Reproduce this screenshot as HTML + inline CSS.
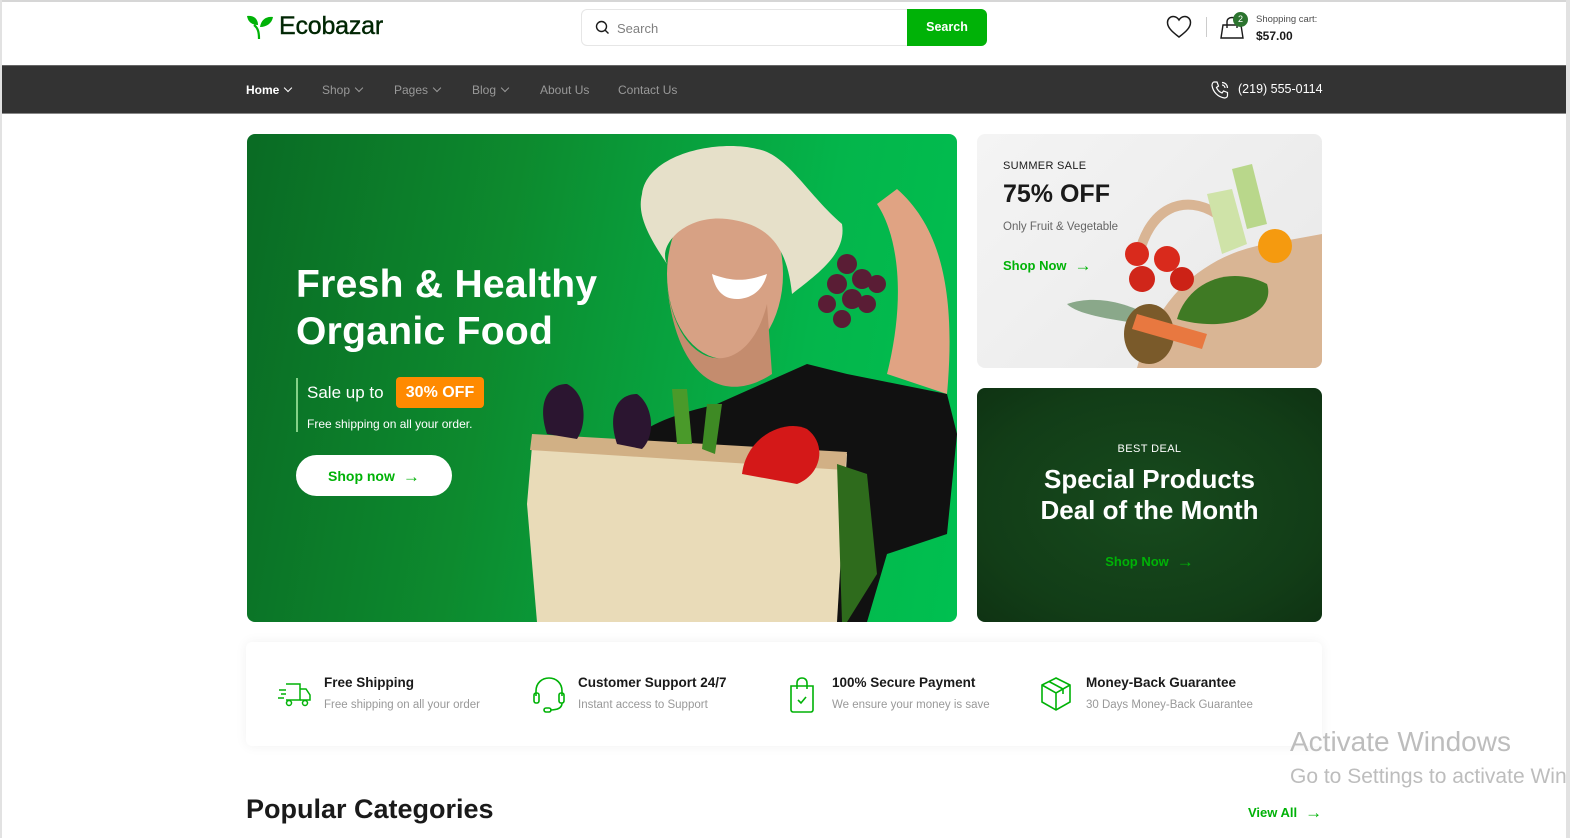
<!DOCTYPE html>
<html><head><meta charset="utf-8"><style>
*{margin:0;padding:0;box-sizing:border-box}
body{width:1570px;height:838px;overflow:hidden;background:#fff;font-family:"Liberation Sans",sans-serif;position:relative;color:#1a1a1a}
.a{position:absolute}
.bt{left:0;top:0;width:1570px;height:2px;background:#d6d6d6}
.bl{left:0;top:0;width:2px;height:838px;background:#e2e2e2}
.br{left:1566px;top:0;width:4px;height:838px;background:#e2e2e2}
.nav{left:2px;top:65px;width:1564px;height:49px;background:#333;border-top:1px solid #666;border-bottom:1px solid #888}
.nav span{position:absolute;top:17px;font-size:12px;color:#999}
.chev{display:inline-block;width:6px;height:6px;border-right:1.3px solid currentColor;border-bottom:1.3px solid currentColor;transform:rotate(45deg);margin-left:6px;position:relative;top:-3px}
.feat{left:246px;top:642px;width:1076px;height:104px;background:#fff;border-radius:6px;box-shadow:0 0 12px rgba(0,0,0,.06)}
.ft{position:absolute;font-size:13.5px;font-weight:bold;color:#1a1a1a;top:33px}
.fs{position:absolute;font-size:11.5px;color:#999;top:57px}
.arr{display:inline-block;font-size:17px;margin-left:8px;position:relative;top:1px;font-weight:normal}
</style></head><body>
<div class="a bt"></div><div class="a bl"></div><div class="a br"></div>
<svg class="a" style="left:246px;top:14px" width="28" height="26" viewBox="0 0 28 26"><path d="M13 25 C13 18 12 14 8 11" stroke="#00b207" stroke-width="2.2" fill="none"/><path d="M1 2 C8 1 12 5 12 11 C6 11 2 8 1 2Z" fill="#00b207"/><path d="M27 3 C20 2 15 6 14 13 C21 13 26 9 27 3Z" fill="#00b207"/></svg>
<div class="a" style="left:279px;top:12px;font-size:25px;color:#002603;letter-spacing:-0.2px;-webkit-text-stroke:0.4px #002603">Ecobazar</div>
<div class="a" style="left:581px;top:9px;width:406px;height:37px;border:1px solid #e6e6e6;border-radius:6px"></div>
<svg class="a" style="left:595px;top:20px" width="15" height="15" viewBox="0 0 15 15"><circle cx="6.5" cy="6.5" r="5" stroke="#1a1a1a" stroke-width="1.4" fill="none"/><path d="M10.2 10.2L13.5 13.5" stroke="#1a1a1a" stroke-width="1.4"/></svg>
<div class="a" style="left:617px;top:21px;font-size:13px;color:#808080">Search</div>
<div class="a" style="left:907px;top:9px;width:80px;height:37px;background:#00b207;border-radius:0 6px 6px 0;color:#fff;font-size:12.5px;font-weight:bold;text-align:center;line-height:37px">Search</div>
<svg class="a" style="left:1166px;top:15px" width="26" height="24" viewBox="0 0 26 24"><path d="M13 22 C5 16 1.5 12 1.5 7.5 C1.5 4 4 1.5 7.2 1.5 C9.8 1.5 11.7 3 13 5 C14.3 3 16.2 1.5 18.8 1.5 C22 1.5 24.5 4 24.5 7.5 C24.5 12 21 16 13 22Z" stroke="#1a1a1a" stroke-width="1.5" fill="none"/></svg>
<div class="a" style="left:1206px;top:17px;width:1px;height:20px;background:#ccc"></div>
<svg class="a" style="left:1219px;top:16px" width="26" height="24" viewBox="0 0 26 24"><path d="M2 22 L4 9 H22 L24 22Z" stroke="#1a1a1a" stroke-width="1.4" fill="none"/><path d="M8 12 V6 C8 3 10 1.5 13 1.5 C16 1.5 18 3 18 6 V12" stroke="#1a1a1a" stroke-width="1.4" fill="none"/></svg>
<div class="a" style="left:1233px;top:12px;width:15px;height:15px;border-radius:50%;background:#2c742f;color:#fff;font-size:9px;text-align:center;line-height:15px">2</div>
<div class="a" style="left:1256px;top:14px;font-size:9.5px;color:#4d4d4d">Shopping cart:</div>
<div class="a" style="left:1256px;top:29px;font-size:12px;font-weight:bold;color:#1a1a1a">$57.00</div>
<div class="a nav">
<span style="left:244px;color:#fff;font-weight:bold">Home<i class="chev"></i></span>
<span style="left:320px">Shop<i class="chev"></i></span>
<span style="left:392px">Pages<i class="chev"></i></span>
<span style="left:470px">Blog<i class="chev"></i></span>
<span style="left:538px">About Us</span>
<span style="left:616px">Contact Us</span>
<svg style="position:absolute;left:1208px;top:14px" width="20" height="20" viewBox="0 0 20 20"><path d="M4 2 L7 2 L8.5 6 L6.5 7.5 C7.5 10 9.5 12 12 13 L13.5 11 L17.5 12.5 V15.5 C17.5 17 16 18 14.5 18 C8 17 3 12 2 5.5 C2 3.5 3 2 4 2Z" stroke="#fff" stroke-width="1.2" fill="none"/><path d="M12 2.5 A5.5 5.5 0 0 1 17.5 8 M12 5 A3 3 0 0 1 15 8" stroke="#fff" stroke-width="1.2" fill="none"/></svg>
<span style="left:1236px;top:16px;color:#fff;font-size:12.5px">(219) 555-0114</span>
</div>
<div class="a" style="left:247px;top:134px;width:710px;height:488px;border-radius:8px;overflow:hidden;background:linear-gradient(100deg,#0a6b24 0%,#0d8a2e 35%,#04b54b 75%,#00c050 100%)">
<svg width="710" height="488" style="position:absolute;left:0;top:0">
<path d="M350 488 L360 330 C390 290 430 280 470 270 L560 230 L600 240 L700 260 L710 300 L700 400 L640 420 L620 488Z" fill="#111"/>
<path d="M640 240 C660 160 650 100 630 70 L650 55 C690 90 710 150 700 260Z" fill="#e0a383"/>
<ellipse cx="478" cy="140" rx="58" ry="85" fill="#d7a184"/>
<path d="M420 150 C430 240 500 250 520 170 L525 240 C480 270 430 250 420 150Z" fill="#c48c6e"/>
<path d="M395 60 C400 20 470 5 510 15 C540 20 560 60 595 90 C600 120 570 140 545 160 C540 110 520 90 480 85 C440 80 410 110 420 130 C400 100 390 80 395 60Z" fill="#e6e0c9"/>
<path d="M465 140 C490 150 505 145 520 140 C515 160 500 165 490 165 C475 165 468 155 465 140Z" fill="#fff"/>
<g fill="#5a1d35"><circle cx="600" cy="130" r="10"/><circle cx="615" cy="145" r="10"/><circle cx="590" cy="150" r="10"/><circle cx="605" cy="165" r="10"/><circle cx="580" cy="170" r="9"/><circle cx="620" cy="170" r="9"/><circle cx="595" cy="185" r="9"/><circle cx="630" cy="150" r="9"/></g>
<path d="M280 370 L285 312 L600 320 L590 488 L290 488Z" fill="#e9dbb8"/>
<path d="M285 300 L600 318 L598 336 L283 316Z" fill="#d1b085"/>
<path d="M300 300 C290 270 300 250 320 250 C340 260 340 290 330 305Z" fill="#2b1530"/>
<path d="M370 310 C360 280 370 260 390 260 C405 270 410 300 395 315Z" fill="#2b1530"/>
<path d="M430 310 L425 255 L440 255 L445 310Z" fill="#4a9a2a"/><path d="M455 315 L460 270 L475 270 L468 320Z" fill="#3e8a24"/>
<path d="M495 340 C500 300 540 285 560 295 C580 310 575 340 550 350Z" fill="#d41818"/>
<path d="M590 330 L620 340 L630 440 L600 488 L595 488Z" fill="#2e6b1c"/>
</svg>
<div class="a" style="left:49px;top:127px;font-size:39px;font-weight:bold;color:#fff;line-height:47px;letter-spacing:0.3px">Fresh &amp; Healthy<br>Organic Food</div>
<div class="a" style="left:49px;top:244px;width:2px;height:54px;background:#84d187"></div>
<div class="a" style="left:60px;top:249px;font-size:17px;color:#fff">Sale up to</div>
<div class="a" style="left:149px;top:243px;width:88px;height:31px;background:#ff8a00;border-radius:4px;color:#fff;font-size:16px;font-weight:bold;text-align:center;line-height:31px">30% OFF</div>
<div class="a" style="left:60px;top:283px;font-size:12px;color:#fff">Free shipping on all your order.</div>
<div class="a" style="left:49px;top:321px;width:156px;height:41px;background:#fff;border-radius:21px;color:#00b207;font-size:14px;font-weight:bold;line-height:41px;padding-left:32px">Shop now<span class="arr">→</span></div>
</div>
<div class="a" style="left:977px;top:134px;width:345px;height:234px;border-radius:8px;overflow:hidden;background:linear-gradient(135deg,#f4f4f4,#e8e8e8)">
<svg width="345" height="234" style="position:absolute;left:0;top:0">
<path d="M160 234 C180 160 230 120 290 110 L345 100 L345 234Z" fill="#d9b594"/>
<path d="M160 130 C170 70 210 60 240 80" stroke="#d9b594" stroke-width="10" fill="none"/>
<path d="M200 185 C210 150 250 130 290 150 C300 180 250 200 200 185Z" fill="#3f7a24"/>
<circle cx="165" cy="145" r="13" fill="#d0261a"/><circle cx="190" cy="125" r="13" fill="#d92a1c"/><circle cx="205" cy="145" r="12" fill="#cc2216"/><circle cx="160" cy="120" r="12" fill="#d92a1c"/>
<path d="M230 60 L255 55 L270 110 L245 120Z" fill="#cfe3a8"/><path d="M255 35 L275 30 L290 90 L270 95Z" fill="#b9d78b"/>
<circle cx="298" cy="112" r="17" fill="#f59a0f"/>
<path d="M90 170 C120 160 150 170 170 180 L165 190 C130 185 100 180 90 170Z" fill="#8aa88a"/>
<ellipse cx="172" cy="200" rx="25" ry="30" fill="#7a5a2a"/>
<path d="M160 180 L230 200 L225 215 L155 195Z" fill="#e87840"/>
</svg>
<div class="a" style="left:26px;top:26px;font-size:11px;color:#1a1a1a;letter-spacing:0.3px">SUMMER SALE</div>
<div class="a" style="left:26px;top:46px;font-size:25px;font-weight:bold;color:#1a1a1a">75% OFF</div>
<div class="a" style="left:26px;top:87px;font-size:11.5px;color:#666">Only Fruit &amp; Vegetable</div>
<div class="a" style="left:26px;top:121px;font-size:13px;font-weight:bold;color:#00b207">Shop Now<span class="arr">→</span></div>
</div>
<div class="a" style="left:977px;top:388px;width:345px;height:234px;border-radius:8px;overflow:hidden;background:radial-gradient(ellipse at 50% 50%,#174a1d,#123d17 70%,#0f3313);text-align:center">
<div class="a" style="left:0;width:345px;top:55px;font-size:11px;color:#fff;letter-spacing:0.4px">BEST DEAL</div>
<div class="a" style="left:0;width:345px;top:76px;font-size:26px;font-weight:bold;color:#fff;line-height:31px">Special Products<br>Deal of the Month</div>
<div class="a" style="left:0;width:345px;top:163px;font-size:13px;font-weight:bold;color:#00b207">Shop Now<span class="arr">→</span></div>
</div>
<div class="a feat">
<svg style="position:absolute;left:32px;top:38px" width="34" height="30" viewBox="0 0 34 30" fill="none" stroke="#00b207" stroke-width="1.5"><path d="M8 4 H22 V20 H8"/><path d="M22 9 H28 L32 15 V20 H22"/><circle cx="11" cy="23" r="2.5"/><circle cx="27" cy="23" r="2.5"/><path d="M1 10 H8 M3 14 H8 M0 18 H6"/></svg>
<div class="ft" style="left:78px">Free Shipping</div><div class="fs" style="left:78px">Free shipping on all your order</div>
<svg style="position:absolute;left:286px;top:34px" width="34" height="38" viewBox="0 0 34 38" fill="none" stroke="#00b207" stroke-width="1.6"><path d="M4 20 V15 C4 7 10 2 17 2 C24 2 30 7 30 15 V20"/><rect x="2" y="17" width="5" height="10" rx="2"/><rect x="27" y="17" width="5" height="10" rx="2"/><path d="M30 27 C30 32 25 34 18 34"/><rect x="12" y="32" width="7" height="4" rx="2"/></svg>
<div class="ft" style="left:332px">Customer Support 24/7</div><div class="fs" style="left:332px">Instant access to Support</div>
<svg style="position:absolute;left:542px;top:34px" width="28" height="38" viewBox="0 0 28 38" fill="none" stroke="#00b207" stroke-width="1.6"><path d="M3 10 H25 L25 34 C25 35 24 36 23 36 H5 C4 36 3 35 3 34Z"/><path d="M9 13 V7 C9 4 11 2 14 2 C17 2 19 4 19 7 V13"/><path d="M10 24 L13 27 L18 21"/></svg>
<div class="ft" style="left:586px">100% Secure Payment</div><div class="fs" style="left:586px">We ensure your money is save</div>
<svg style="position:absolute;left:794px;top:34px" width="32" height="36" viewBox="0 0 32 36" fill="none" stroke="#00b207" stroke-width="1.6"><path d="M16 2 L30 9 V26 L16 34 L2 26 V9Z"/><path d="M2 9 L16 17 L30 9 M16 17 V34"/><path d="M9 5.5 L23 13 V18"/></svg>
<div class="ft" style="left:840px">Money-Back Guarantee</div><div class="fs" style="left:840px">30 Days Money-Back Guarantee</div>
</div>
<div class="a" style="left:246px;top:794px;font-size:27px;font-weight:bold;color:#1a1a1a">Popular Categories</div>
<div class="a" style="left:1248px;top:802px;font-size:13px;font-weight:bold;color:#00b207">View All<span class="arr">→</span></div>
<div class="a" style="left:1290px;top:726px;font-size:28px;color:#bdbdbd;white-space:nowrap">Activate Windows</div>
<div class="a" style="left:1290px;top:765px;font-size:21px;color:#bdbdbd;white-space:nowrap;width:276px;overflow:hidden">Go to Settings to activate Windows.</div>
</body></html>
